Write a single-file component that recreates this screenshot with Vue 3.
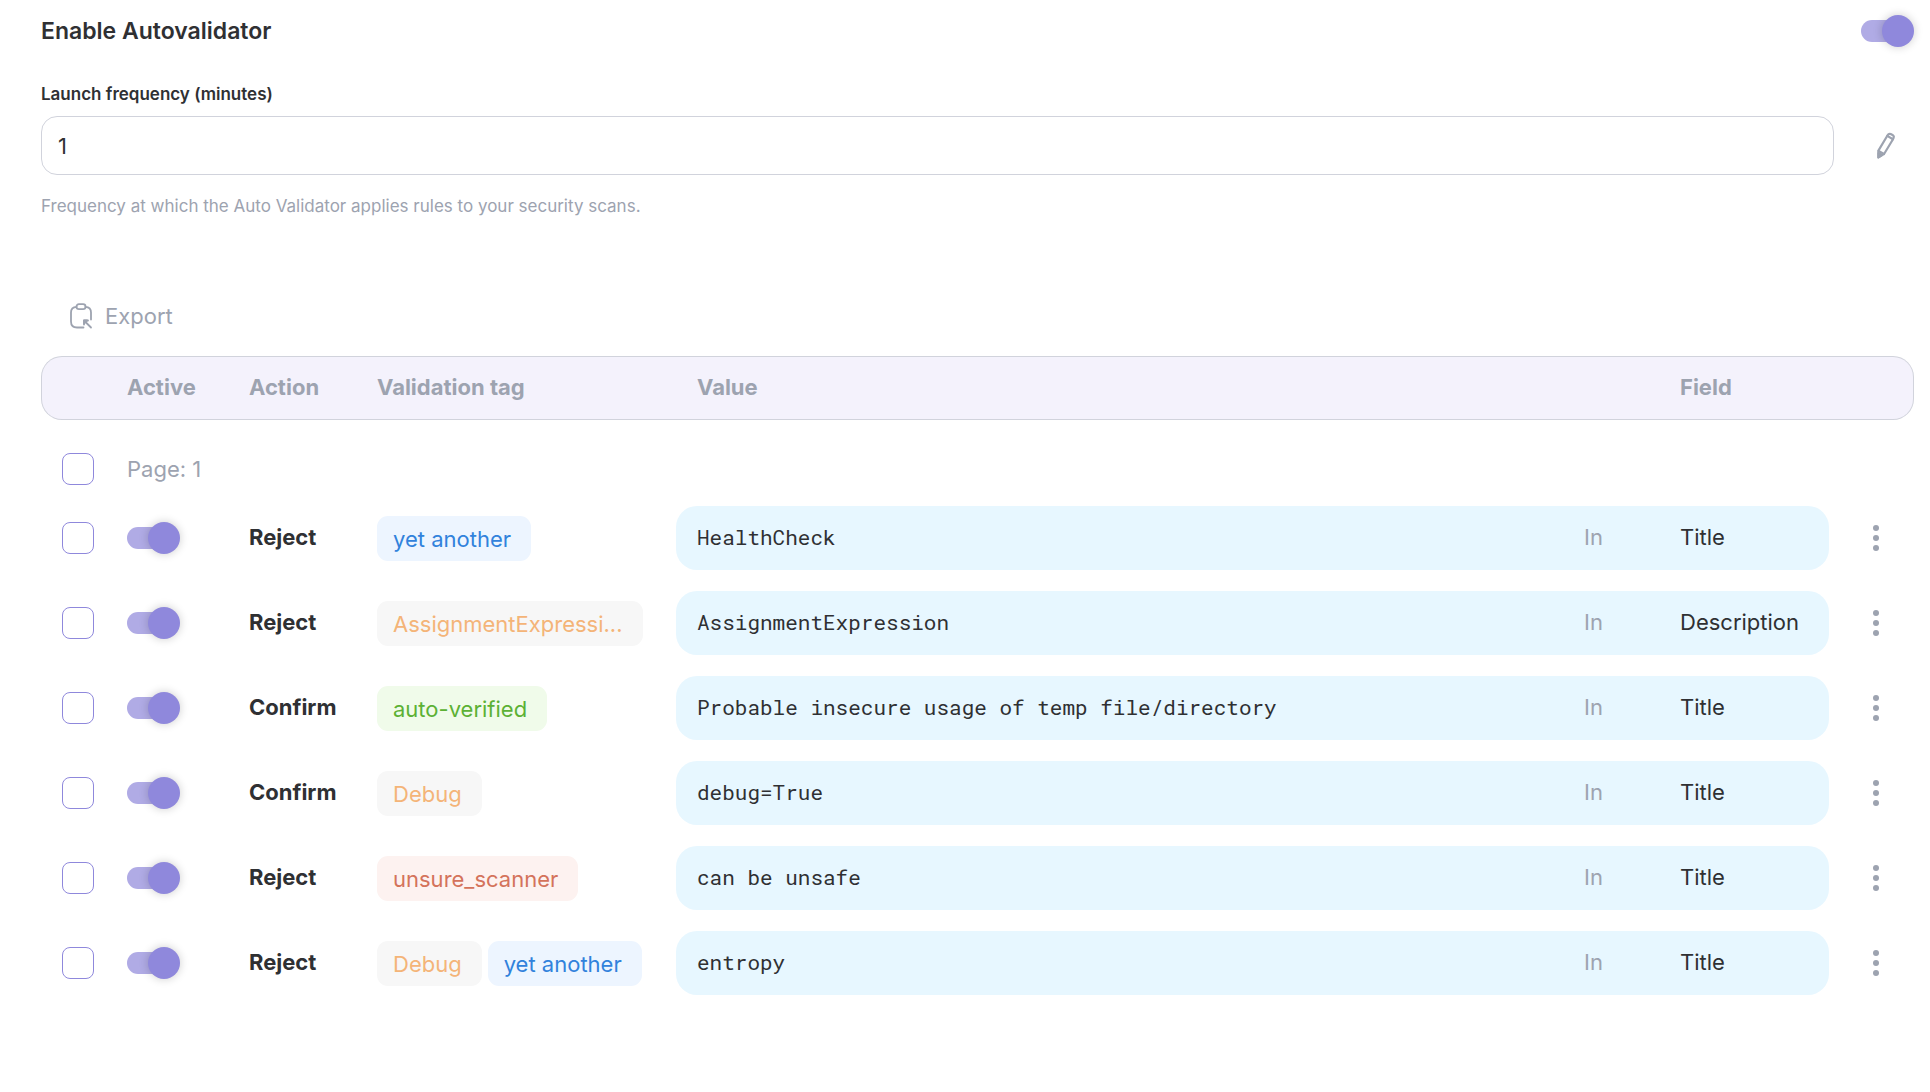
<script setup>
import { ref } from 'vue'

const enabled = ref(true)
const frequency = ref('1')
const pageSelected = ref(false)

const rules = ref([
  { id: 1, selected: false, active: true, action: 'Reject', tags: [{ label: 'yet another', tone: 'blue' }], value: 'HealthCheck', field: 'Title' },
  { id: 2, selected: false, active: true, action: 'Reject', tags: [{ label: 'AssignmentExpressi...', tone: 'orange' }], value: 'AssignmentExpression', field: 'Description' },
  { id: 3, selected: false, active: true, action: 'Confirm', tags: [{ label: 'auto-verified', tone: 'green' }], value: 'Probable insecure usage of temp file/directory', field: 'Title' },
  { id: 4, selected: false, active: true, action: 'Confirm', tags: [{ label: 'Debug', tone: 'orange' }], value: 'debug=True', field: 'Title' },
  { id: 5, selected: false, active: true, action: 'Reject', tags: [{ label: 'unsure_scanner', tone: 'red' }], value: 'can be unsafe', field: 'Title' },
  { id: 6, selected: false, active: true, action: 'Reject', tags: [{ label: 'Debug', tone: 'orange' }, { label: 'yet another', tone: 'blue' }], value: 'entropy', field: 'Title' },
])
</script>

<template>
  <main class="page">
    <header class="heading">
      <label class="heading-label" for="enable">Enable Autovalidator</label>
      <input id="enable" v-model="enabled" class="switch" type="checkbox" role="switch" />
    </header>

    <section class="frequency">
      <label class="frequency-label" for="frequency">Launch frequency (minutes)</label>
      <div class="frequency-row">
        <input id="frequency" v-model="frequency" class="frequency-input" type="text" />
        <button class="icon-button edit" type="button" aria-label="Edit frequency">
          <svg width="20" height="28" viewBox="0 0 20 28" fill="none" stroke="currentColor" stroke-width="2.200" stroke-linejoin="round" stroke-linecap="round">
            <path d="M11.6 3.2 12.400 2.400Q13.400 1.400 14.600 2L17 3.300Q18.300 4.200 17.700 5.500L17 7.200 8.200 21.800 2.400 25.400 2.400 18.600Z" />
            <path d="M11.300 3.900 16.900 7.200M2.600 19 8 22" />
            <path d="M2.400 21 6 23 2.400 25.400Z" fill="currentColor" />
          </svg>
        </button>
      </div>
      <p class="hint">Frequency at which the Auto Validator applies rules to your security scans.</p>
    </section>

    <button class="export" type="button">
      <svg width="24" height="26" viewBox="0 0 24 26" fill="none" stroke="currentColor" stroke-width="1.800" stroke-linecap="round" stroke-linejoin="round">
        <path d="M7.500 3.800C3.500 4 2 5.800 2 9.500V18.500C2 22.800 3.800 24.500 8 24.500H14.500" />
        <path d="M16.500 3.800C20.500 4 22 5.800 22 9.500V16.500" />
        <rect x="7.500" y="1.200" width="9" height="5" rx="2.400" />
        <path d="M22 24.500 15 17.500M15 21.500V17.500H19" />
        <path d="M15 20.500V17.500H18Z" fill="currentColor" />
      </svg>
      <span>Export</span>
    </button>

    <table class="rules">
      <colgroup>
        <col class="col-select" />
        <col class="col-active" />
        <col class="col-action" />
        <col class="col-tags" />
        <col />
        <col class="col-in" />
        <col class="col-field" />
        <col class="col-menu" />
      </colgroup>
      <thead>
        <tr>
          <th></th>
          <th scope="col">Active</th>
          <th scope="col">Action</th>
          <th scope="col">Validation tag</th>
          <th class="value" scope="col">Value</th>
          <th></th>
          <th scope="col">Field</th>
          <th></th>
        </tr>
      </thead>
      <tbody>
        <tr class="page-row">
          <td class="select"><input id="page-1" v-model="pageSelected" class="check" type="checkbox" /></td>
          <td colspan="7"><label class="page-label" for="page-1">Page: 1</label></td>
        </tr>
        <tr v-for="rule in rules" :key="rule.id" class="rule">
          <td class="select"><input v-model="rule.selected" class="check" type="checkbox" :aria-label="`Select ${rule.value}`" /></td>
          <td><input v-model="rule.active" class="switch" type="checkbox" role="switch" :aria-label="`Activate ${rule.value}`" /></td>
          <td class="action">{{ rule.action }}</td>
          <td>
            <div class="tags">
              <span v-for="tag in rule.tags" :key="tag.label" class="tag" :class="tag.tone">{{ tag.label }}</span>
            </div>
          </td>
          <td class="value pill pill-start">{{ rule.value }}</td>
          <td class="pill muted">In</td>
          <td class="pill pill-end">{{ rule.field }}</td>
          <td>
            <button class="icon-button" type="button" aria-label="Rule menu">
              <svg width="6" height="26" viewBox="0 0 6 26" fill="currentColor">
                <circle cx="3" cy="3" r="3" />
                <circle cx="3" cy="13" r="3" />
                <circle cx="3" cy="23" r="3" />
              </svg>
            </button>
          </td>
        </tr>
      </tbody>
    </table>
  </main>
</template>

<style>
body {
  background: #fff;
}
</style>

<style scoped>
.page {
  padding: 15px 16px 21px 41px;
  color: #2f3033;
  font-family: Inter, "Open Sans", sans-serif;
  font-size: 22px;
  line-height: 32px;
}

.heading {
  display: flex;
  align-items: center;
  justify-content: space-between;
}

.heading-label {
  font-size: 23px;
  font-weight: 600;
}

input,
button {
  margin: 0;
  font: inherit;
  color: inherit;
}

.switch {
  appearance: none;
  position: relative;
  display: block;
  width: 53px;
  height: 32px;
  cursor: pointer;
}

.switch::before,
.switch::after {
  content: "";
  position: absolute;
}

.switch::before {
  inset: 5px 3px 5px 0;
  border-radius: 11px;
  background: #b0abe5;
}

.switch::after {
  top: 0;
  left: 0;
  width: 32px;
  height: 32px;
  border-radius: 50%;
  background: #8f88dc;
  box-shadow: 0 0 10px rgba(0, 0, 0, 0.2);
}

.switch:checked::after {
  left: auto;
  right: 0;
}

.frequency {
  margin-top: 35px;
}

.frequency-label {
  display: block;
  font-size: 17px;
  font-weight: 600;
  line-height: 24px;
}

.frequency-row {
  display: flex;
  margin-top: 10px;
}

.frequency-input {
  flex: 1;
  box-sizing: border-box;
  min-width: 0;
  height: 59px;
  padding: 0 16px;
  border: 1px solid #d1d3dc;
  border-radius: 16px;
  background: #fff;
}

.icon-button {
  display: flex;
  align-items: center;
  justify-content: center;
  box-sizing: border-box;
  width: 80px;
  padding: 0 0 0 14px;
  border: 0;
  background: none;
  color: #9da3b0;
  cursor: pointer;
}

.edit {
  padding-left: 24px;
}

.hint {
  margin: 19px 0 0;
  color: #9da3b0;
  font-size: 17px;
  line-height: 24px;
}

.export {
  display: flex;
  align-items: center;
  gap: 12px;
  margin: 82px 0 0;
  padding: 0 28px;
  border: 0;
  background: none;
  color: #9da3b0;
  cursor: pointer;
}

.rules {
  width: 100%;
  margin-top: 3px;
  border-collapse: separate;
  border-spacing: 0 21px;
  table-layout: fixed;
}

.col-select {
  width: 86px;
}

.col-active {
  width: 122px;
}

.col-action {
  width: 128px;
}

.col-tags {
  width: 299px;
}

.col-in {
  width: 96px;
}

.col-field {
  width: 149px;
}

.col-menu {
  width: 85px;
}

th,
td {
  box-sizing: border-box;
  padding: 0;
  text-align: left;
}

th {
  height: 64px;
  padding-bottom: 2px;
  border: solid #d1d3dc;
  border-width: 1px 0;
  background: #f4f2fc;
  color: #9da3b0;
  font-weight: 700;
}

th:first-child {
  border-left-width: 1px;
  border-radius: 21px 0 0 21px;
}

th:last-child {
  border-right-width: 1px;
  border-radius: 0 21px 21px 0;
}

.page-row td {
  height: 44px;
  vertical-align: bottom;
}

.page-label,
.muted {
  color: #9da3b0;
}

.rule td {
  height: 64px;
}

.select {
  padding-left: 21px;
}

.check {
  appearance: none;
  display: block;
  box-sizing: border-box;
  width: 32px;
  height: 32px;
  border: 1px solid #8f88dc;
  border-radius: 8px;
  background: #fff;
}

.check:checked {
  background: #8f88dc;
}

.rule .action,
.rule .pill {
  padding-bottom: 2px;
}

.action {
  font-weight: 700;
}

.tags {
  display: flex;
  gap: 6px;
}

.tag {
  padding: 7px 20px 6px 16px;
  border-radius: 11px;
  white-space: nowrap;
}

.blue {
  background: #edf5ff;
  color: #3182dc;
}

.orange {
  background: #f7f7f7;
  color: #f4b478;
}

.green {
  background: #f0fbea;
  color: #5cb135;
}

.red {
  background: #fdf2f0;
  color: #d4735b;
}

.value {
  padding-left: 21px;
}

.pill {
  background: #e7f7ff;
}

.pill-start {
  border-radius: 21px 0 0 21px;
  font-family: "Roboto Mono", "DejaVu Sans Mono", monospace;
  font-size: 21px;
}

.pill-end {
  border-radius: 0 21px 21px 0;
}
</style>
